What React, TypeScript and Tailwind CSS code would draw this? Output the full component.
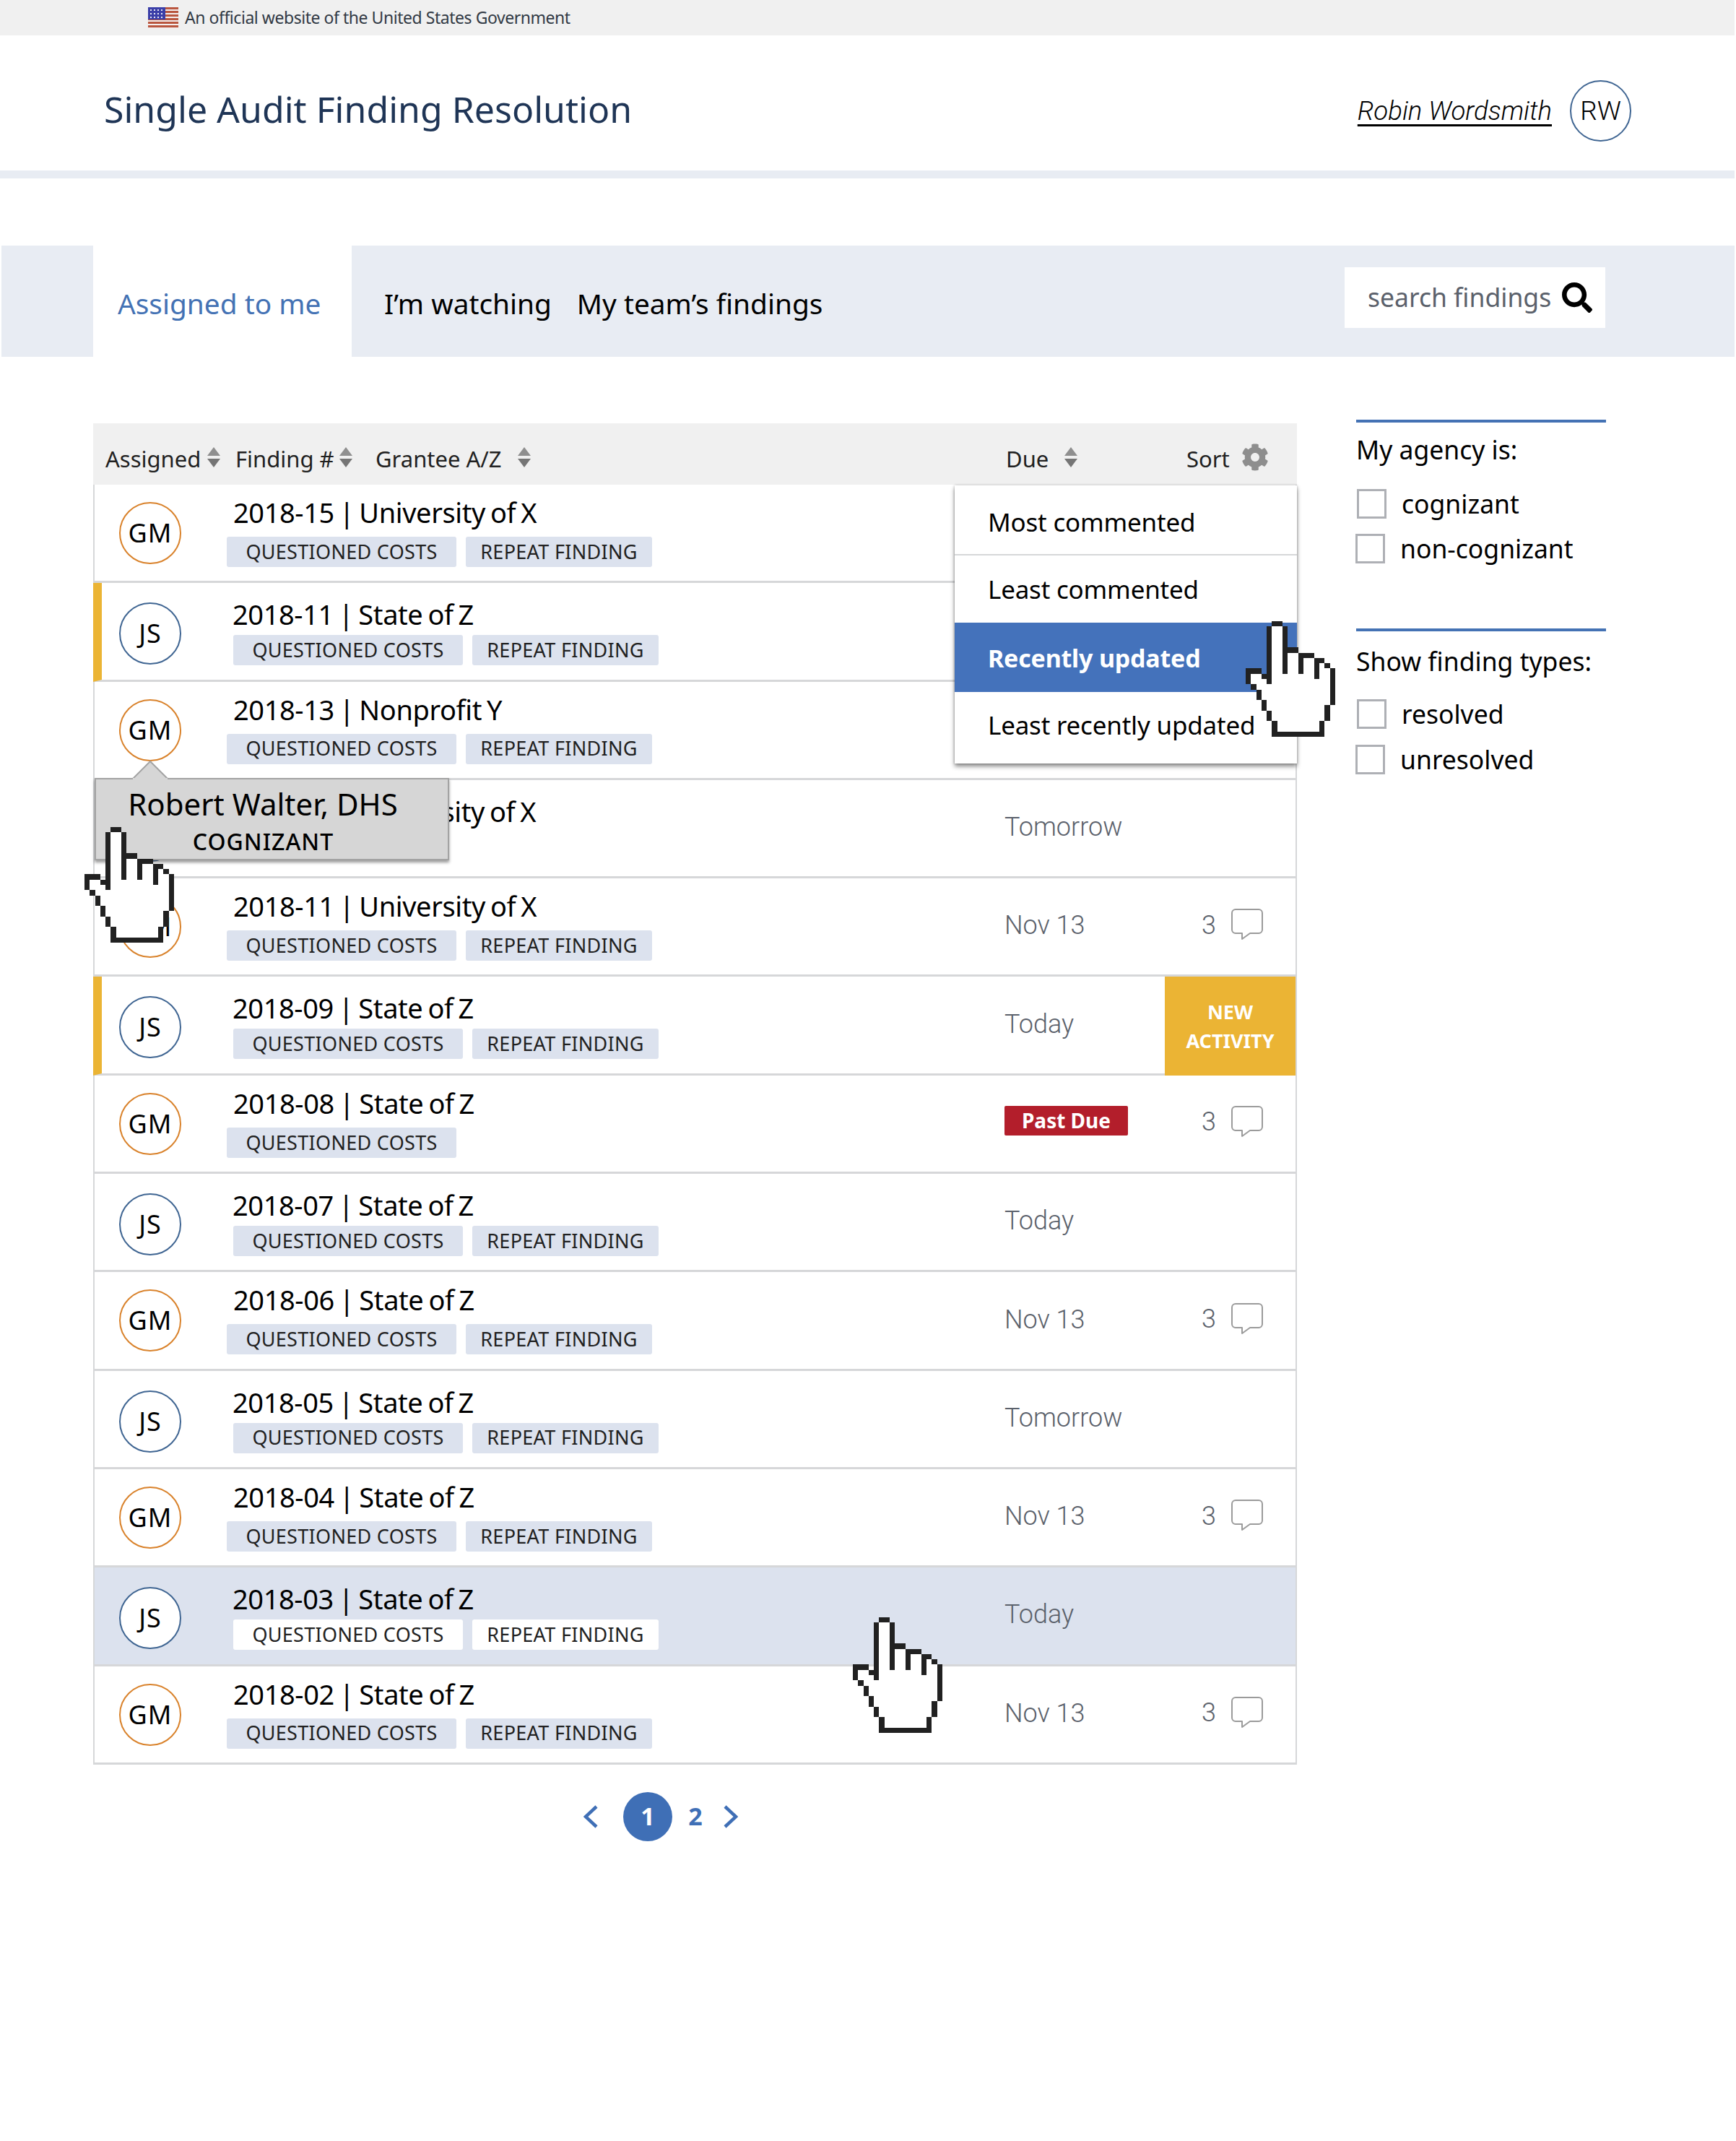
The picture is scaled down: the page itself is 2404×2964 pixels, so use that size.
import React from 'react';
import { FaCog, FaSearch } from 'react-icons/fa';

type Finding = {
  who: 'GM' | 'JS';
  title: string;
  tags?: number;
  due?: string;
  comments?: boolean;
  flagged?: boolean;
  hovered?: boolean;
  pastDue?: boolean;
  fresh?: boolean;
};

const findings: Finding[] = [
  { who: 'GM', title: '2018-15 | University of X', tags: 2 },
  { who: 'JS', title: '2018-11 | State of Z', tags: 2, flagged: true },
  { who: 'GM', title: '2018-13 | Nonprofit Y', tags: 2 },
  { who: 'JS', title: '2018-12 | University of X', tags: 0, due: 'Tomorrow' },
  { who: 'GM', title: '2018-11 | University of X', tags: 2, due: 'Nov 13', comments: true },
  { who: 'JS', title: '2018-09 | State of Z', tags: 2, due: 'Today', flagged: true, fresh: true },
  { who: 'GM', title: '2018-08 | State of Z', tags: 1, pastDue: true, comments: true },
  { who: 'JS', title: '2018-07 | State of Z', tags: 2, due: 'Today' },
  { who: 'GM', title: '2018-06 | State of Z', tags: 2, due: 'Nov 13', comments: true },
  { who: 'JS', title: '2018-05 | State of Z', tags: 2, due: 'Tomorrow' },
  { who: 'GM', title: '2018-04 | State of Z', tags: 2, due: 'Nov 13', comments: true },
  { who: 'JS', title: '2018-03 | State of Z', tags: 2, due: 'Today', hovered: true },
  { who: 'GM', title: '2018-02 | State of Z', tags: 2, due: 'Nov 13', comments: true },
];

// black cells of the pixel cursor: [col, row, width, height]
const handCells = [
  [5, 0, 2, 1], [4, 1, 1, 11], [7, 1, 1, 9], [8, 5, 2, 1], [10, 6, 1, 4], [11, 6, 2, 1],
  [13, 7, 1, 4], [14, 7, 1, 1], [15, 8, 1, 1], [16, 9, 1, 7], [15, 16, 1, 3], [14, 19, 1, 2],
  [5, 21, 10, 1], [5, 19, 1, 2], [4, 17, 1, 2], [3, 15, 1, 2], [2, 13, 1, 2], [1, 12, 1, 1],
  [0, 9, 1, 3], [1, 9, 2, 1], [3, 10, 1, 1],
];

const Hand = ({ className }: { className: string }) => (
  <svg className={className} width="124" height="164" viewBox="0 0 17 22" shapeRendering="crispEdges">
    <polygon
      fill="#fff"
      points="5,1 7,1 7,6 10,6 10,7 13,7 13,8 15,8 15,9 16,9 16,16 15,16 15,19 14,19 14,21 6,21 6,19 5,19 5,17 4,17 4,15 3,15 3,13 2,13 2,12 1,12 1,10 3,10 3,11 4,11 4,12 5,12"
    />
    {handCells.map(([x, y, w, h]) => (
      <rect key={`${x}-${y}`} x={x} y={y} width={w} height={h} fill="#212121" />
    ))}
  </svg>
);

const SortArrows = () => (
  <svg width="20" height="28" viewBox="0 0 20 28" className="-mt-[6px] shrink-0">
    <polygon points="10,0 19,12 1,12" fill="#8f8f8f" />
    <polygon points="1,16 19,16 10,28" fill="#757575" />
  </svg>
);

const CommentIcon = () => (
  <svg className="-mt-px" width="44" height="44" viewBox="0 0 44 44" fill="none" stroke="#9b9b9b" strokeWidth="2">
    <path d="M6 1H38A5 5 0 0 1 43 6V29A5 5 0 0 1 38 34H26L15 42V34H6A5 5 0 0 1 1 29V6A5 5 0 0 1 6 1Z" strokeLinejoin="round" />
  </svg>
);

const Flag = () => (
  <svg width="42" height="30" viewBox="0 0 42 30" shapeRendering="crispEdges">
    <rect width="42" height="30" fill="#f4eeee" />
    {[0, 5, 10, 15, 20, 25].map((y) => (
      <rect key={y} y={y} width="42" height="3" fill="#b9563f" />
    ))}
    <rect width="24" height="17" fill="#3b3fa8" />
    {[3, 8, 13].map((y) =>
      [3, 8, 13, 18].map((x) => <rect key={`${x}-${y}`} x={x} y={y} width="2" height="2" fill="#e6e6f2" />),
    )}
  </svg>
);

const Tag = ({ wide, light }: { wide?: boolean; light?: boolean }) => (
  <span
    className={`flex h-[42px] items-center justify-center rounded-[3px] text-[27px] tracking-[0.3px] text-[#212121] ${
      wide ? 'w-[318px]' : 'w-[258px]'
    } ${light ? 'bg-white' : 'bg-[#dce2ee]'}`}
  >
    {wide ? 'QUESTIONED COSTS' : 'REPEAT FINDING'}
  </span>
);

const Row = ({ item }: { item: Finding }) => {
  const gm = item.who === 'GM';
  return (
    <div
      className={`flex h-[136.3px] border-b-[3px] border-b-[#d6d7d9] ${
        item.flagged ? 'border-l-[12px] border-l-[#ebb434] pl-[24px]' : 'border-l-2 border-l-[#d6d7d9] pl-[34px]'
      } ${item.hovered ? 'bg-[#dce2ee]' : 'bg-white'}`}
    >
      <div
        className={`flex h-[86px] w-[86px] shrink-0 items-center justify-center rounded-full border-2 bg-white text-[36px] tracking-[1px] text-black ${
          gm ? 'mt-[24px] border-[#d9822b]' : 'mt-[27px] border-[#3f6592]'
        }`}
      >
        {item.who}
      </div>
      <div className={`flex-1 ${gm ? 'ml-[63px] pt-[13px]' : 'ml-[72px] pt-[18px]'}`}>
        <div
          className={`h-[50px] text-[38px] leading-[50px] tracking-[-0.4px] text-black [word-spacing:-2.5px] ${
            gm ? 'ml-[9px]' : '-ml-px'
          }`}
        >
          {item.title}
        </div>
        {item.tags ? (
          <div className={`flex gap-[13px] ${gm ? 'mt-[9px]' : 'mt-[4px]'}`}>
            <Tag wide light={item.hovered} />
            {item.tags > 1 && <Tag light={item.hovered} />}
          </div>
        ) : null}
      </div>
      <div className="flex w-[222px] items-center pb-[3px] font-['Roboto',sans-serif] text-[36px] font-light text-[#5b616b]">
        {item.pastDue ? (
          <span className="-mt-[5px] flex h-[41px] w-[171px] items-center justify-center rounded-[2px] bg-[#b31e2b] font-['Noto_Sans',sans-serif] text-[28px] font-bold text-white">
            Past Due
          </span>
        ) : (
          item.due
        )}
      </div>
      <div className="flex w-[181px] items-center">
        {item.fresh && (
          <div className="-mb-[3px] flex h-[calc(100%+3px)] w-[183px] flex-col items-center justify-center self-start bg-[#ebb434] text-center text-[27px] leading-[40px] font-bold text-white">
            <span>NEW</span>
            <span>ACTIVITY</span>
          </div>
        )}
        {item.comments && (
          <div className="flex items-center pb-[4px] pl-[51px] font-['Roboto',sans-serif] text-[36px] font-light text-[#5b616b]">
            <span className="w-[41px]">3</span>
            <CommentIcon />
          </div>
        )}
      </div>
    </div>
  );
};

const Check = ({ label, shift }: { label: string; shift: string }) => (
  <label className={`flex h-[41px] items-center gap-[21px] text-[35.5px] text-black ${shift}`}>
    <input type="checkbox" className="h-[41px] w-[41px] appearance-none border-[3px] border-[#aeb0b5] bg-white" />
    {label}
  </label>
);

export default function App() {
  return (
    <div className="h-[2964px] w-[2402px] bg-white font-['Noto_Sans',sans-serif]">
      <div className="flex h-[49px] items-center gap-[9px] bg-[#f0f0f0] pl-[205px]">
        <Flag />
        <span className="text-[23px] tracking-[-0.46px] text-[#323a45]">An official website of the United States Government</span>
      </div>
      <header className="flex h-[187px] items-center justify-between pt-[22px] pr-[143px] pl-[144px]">
        <h1 className="-mt-[4px] text-[50px] font-normal text-[#1f3556]">Single Audit Finding Resolution</h1>
        <div className="flex items-center gap-[25px]">
          <a className="mt-[2px] text-[36.6px] font-['Roboto',sans-serif] font-light text-black italic underline underline-offset-[6px]">Robin Wordsmith</a>
          <div className="flex h-[85px] w-[85px] items-center justify-center rounded-full border-2 border-[#3f6592] font-['Roboto',sans-serif] text-[37px] font-light text-black">
            RW
          </div>
        </div>
      </header>
      <div className="h-[11px] bg-[#e8ecf3]" />

      <nav className="mt-[93px] ml-[2px] flex h-[154px] bg-[#e8ecf3]">
        <div className="ml-[127px] flex w-[358px] items-center bg-white pl-[34px] text-[38.8px] text-[#4472b4]">
          <span className="mt-[6px]">Assigned to me</span>
        </div>
        <div className="flex flex-1 items-center pl-[45px] text-[38.8px] text-black">
          <span className="mt-[6px]">I’m watching</span>
          <span className="mt-[6px] ml-[35px]">My team’s findings</span>
        </div>
        <div className="mt-[30px] mr-[179px] flex h-[84px] w-[361px] items-center bg-white pl-[32px] text-[35.5px] text-[#5b616b]">
          <span>search findings</span>
          <FaSearch className="ml-[15px] h-[42px] w-[42px] text-black" />
        </div>
      </nav>

      <main className="mt-[92px] ml-[129px] flex">
        <section className="relative w-[1667px]">
          <div className="flex h-[85px] items-center bg-[#f0f0f0] pt-[14px] pl-[17px] text-[31px] text-[#212121]">
            <span className="w-[140px]">Assigned</span>
            <SortArrows />
            <span className="ml-[20px] w-[143px]">Finding #</span>
            <SortArrows />
            <span className="ml-[31px] w-[196px]">Grantee A/Z</span>
            <SortArrows />
            <span className="ml-[657px] w-[80px]">Due</span>
            <SortArrows />
            <span className="ml-[150px] w-[76px]">Sort</span>
            <FaCog className="-mt-[6px] h-[38px] w-[38px] text-[#8e8e8e]" />
          </div>
          <div className="border-r-2 border-r-[#d6d7d9]">
            {findings.map((item) => (
              <Row key={item.title + item.who} item={item} />
            ))}
          </div>

          <div className="absolute top-[86px] left-[1193px] w-[474px] bg-white text-[35px] tracking-[-0.2px] text-black shadow-[0_4px_6px_rgba(0,0,0,0.45),0_0_3px_rgba(0,0,0,0.25)]">
            <div className="flex h-[97px] items-center border-b-2 border-b-[#d6d7d9] pt-[8px] pl-[46px]">Most commented</div>
            <div className="flex h-[93px] items-center pt-[2px] pl-[46px]">Least commented</div>
            <div className="flex h-[96px] items-center bg-[#4472bb] pt-[2px] pl-[46px] text-[34px] font-bold text-white">Recently updated</div>
            <div className="flex h-[99px] items-center pb-[6px] pl-[46px]">Least recently updated</div>
          </div>

          <div className="absolute top-[491px] left-[2px] h-[114px] w-[491px] border-2 border-[#a3a3a3] bg-[#d6d6d6] text-center text-black shadow-[0_3px_4px_rgba(0,0,0,0.4)]">
            <svg className="absolute -top-[26px] left-[49px]" width="52" height="26" viewBox="0 0 52 26">
              <polygon points="1,26 26,1 51,26" fill="#d6d6d6" stroke="#a3a3a3" strokeWidth="2" />
              <rect x="2" y="24" width="48" height="2" fill="#d6d6d6" />
            </svg>
            <div className="mt-[5px] pr-[25px] text-[42px] leading-[58px]">Robert Walter, DHS</div>
            <div className="mt-[3px] pr-[24px] text-[32px] leading-[40px] font-medium tracking-[1px]">COGNIZANT</div>
          </div>

          <Hand className="absolute top-[272px] left-[1596px]" />
          <Hand className="absolute top-[557px] -left-[12px]" />
          <Hand className="absolute top-[1651px] left-[1052px]" />

          <div className="mt-[38px] ml-[679px] flex h-[68px] items-center text-[34px] font-bold text-[#3f6fb6]">
            <svg width="20" height="32" viewBox="0 0 20 32" fill="none" stroke="currentColor" strokeWidth="4.5">
              <path d="M18 2L3 16L18 30" />
            </svg>
            <span className="ml-[35px] flex h-[68px] w-[68px] items-center justify-center rounded-full bg-[#3f6fb6] text-white">1</span>
            <span className="w-[64px] text-center">2</span>
            <svg className="ml-[7px]" width="20" height="32" viewBox="0 0 20 32" fill="none" stroke="currentColor" strokeWidth="4.5">
              <path d="M2 2L17 16L2 30" />
            </svg>
          </div>
        </section>

        <aside className="-mt-[5px] ml-[82px] w-[346px]">
          <div className="border-t-4 border-t-[#4472b4] pt-[12px]">
            <div className="h-[50px] text-[35.5px] leading-[50px] text-black">My agency is:</div>
            <div className="mt-[30px] flex flex-col gap-[21px]">
              <Check label="cognizant" shift="ml-px" />
              <Check label="non-cognizant" shift="-ml-px" />
            </div>
          </div>
          <div className="mt-[90px] border-t-4 border-t-[#4472b4] pt-[16px]">
            <div className="h-[50px] text-[35.5px] leading-[50px] text-black">Show finding types:</div>
            <div className="mt-[28px] flex flex-col gap-[22px]">
              <Check label="resolved" shift="ml-px" />
              <Check label="unresolved" shift="-ml-px" />
            </div>
          </div>
        </aside>
      </main>
    </div>
  );
}
